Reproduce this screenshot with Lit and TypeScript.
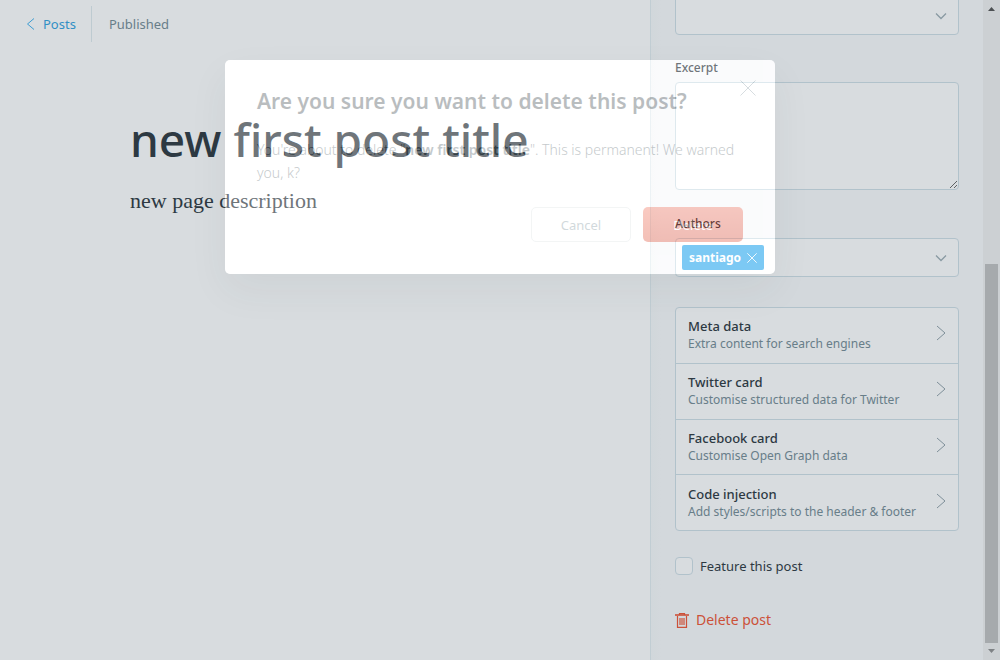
import { LitElement, html, css, svg } from "lit";
import { customElement, state } from "lit/decorators.js";

const chevronDown = html`<svg class="chevron" viewBox="0 0 12 8" width="12" height="8" aria-hidden="true">
  <path d="M1 1.5 6 6.5 11 1.5" fill="none" stroke="currentColor" stroke-width="1.3" />
</svg>`;
const chevronRight = html`<svg class="go" viewBox="0 0 10 16" width="10" height="16" aria-hidden="true">
  <path d="M1 1 9 8 1 15" fill="none" stroke="currentColor" stroke-width="1" />
</svg>`;
const cross = (size: number) => html`<svg viewBox="0 0 16 16" width=${size} height=${size} aria-hidden="true">
  ${svg`<path d="M.5.5 15.5 15.5M15.5.5.5 15.5" fill="none" stroke="currentColor" stroke-width=${14 / size} />`}
</svg>`;

@customElement("app-root")
export class AppRoot extends LitElement {
  @state() private postTitle = "new first post title";
  private rows = [
    ["Meta data", "Extra content for search engines"],
    ["Twitter card", "Customise structured data for Twitter"],
    ["Facebook card", "Customise Open Graph data"],
    ["Code injection", "Add styles/scripts to the header & footer"],
  ];

  static styles = css`
    :host {
      display: block;
      position: relative;
      height: 100vh;
      overflow: hidden;
      background: #fff;
      color: #2a343b;
      font: 13px/20px "Noto Sans", "Open Sans", sans-serif;
    }
    *, *::before, *::after { box-sizing: border-box; }
    button, input, select, textarea { font: inherit; color: inherit; margin: 0; }
    button { cursor: pointer; }
    svg { display: block; flex: none; }
    .page { display: flex; height: 100%; }
    .editor { flex: 1; min-width: 0; }
    .topbar { display: flex; align-items: center; padding: 6px 26px; height: 48px; }
    .back {
      display: flex; align-items: center; gap: 8px;
      height: 36px; padding-right: 15px;
      border-right: 1px solid #dfeaee;
      color: #3eb0ef; text-decoration: none;
    }
    .back-text { color: #2f9fe0; }
    .status { padding-left: 17px; color: #738a94; }
    .post { padding: 60px 40px 0 130px; }
    .post-title { margin: 0; font-size: 46px; line-height: 62px; font-weight: 500; }
    .post-text { margin: 17px 0 0; font: 22px/28px "Liberation Serif", serif; }
    .sidebar {
      width: 333px; flex: none;
      padding: 0 24px;
      background: linear-gradient(90deg, #f7f9fa, #f9fafc 10px);
      border-left: 1px solid #e3edf1;
      overflow: hidden;
    }
    .select-wrap, .tags {
      position: relative; display: flex; align-items: center;
      height: 39px; border: 1px solid #cfdfe7; border-radius: 4px; background: #fff;
    }
    .scrolled { margin-top: -4px; }
    .select-wrap select { width: 100%; height: 100%; border: 0; background: transparent; appearance: none; }
    .chevron { position: absolute; right: 11px; color: #9dadb4; pointer-events: none; }
    .field { margin-top: 24px; }
    .scrolled + .field { margin-top: 23px; }
    .label { display: block; margin-bottom: 4px; font-size: 12px; font-weight: 500; }
    .excerpt {
      display: block; width: 100%; height: 108px; padding: 8px 12px;
      border: 1px solid #cfdfe7; border-radius: 4px; background: #fff;
    }
    .tags { padding: 0 6px; }
    .tag {
      display: flex; align-items: center; gap: 6px; height: 25px; padding: 0 7px;
      border: 0; border-radius: 2px; background: #3eb0ef; color: #fff; font-weight: 700; font-size: 12px;
    }
    .tags input { flex: 1; min-width: 0; border: 0; background: transparent; outline: 0; }
    .list {
      display: flex; flex-direction: column; min-height: 224px; margin-top: 30px;
      border: 1px solid #cfdfe7; border-radius: 4px; background: #fff;
    }
    .row {
      display: flex; flex: 1; justify-content: space-between; align-items: center;
      padding: 0 12px;
      border: 0; background: transparent; text-align: left; line-height: 18px;
    }
    .row + .row { border-top: 1px solid #cfdfe7; }
    .row-title { display: block; font-weight: 500; }
    .row-text { display: block; font-size: 12px; color: #738a94; }
    .go { color: #8f9fa8; margin-bottom: 4px; }
    .feature { display: flex; align-items: center; gap: 7px; margin-top: 24px; height: 22px; }
    .feature input {
      appearance: none; width: 18px; height: 18px;
      border: 1px solid #cfdfe7; border-radius: 4px; background: #fff;
    }
    .delete {
      display: flex; align-items: center; gap: 7px; margin-top: 33px; padding: 0;
      border: 0; background: none; color: #f05230; font-size: 14px;
    }
    .scrollbar {
      display: flex; flex-direction: column; justify-content: space-between; align-items: center;
      width: 17px; flex: none; padding: 7px 0; background: #f1f1f1;
    }
    .thumb { width: 13px; height: 58.7%; margin-top: auto; margin-bottom: 6px; background: #c1c1c1; }
    .modal {
      position: absolute; top: 60px; left: 50%; transform: translateX(-50%);
      width: min(550px, 90%);
      border-radius: 5px;
      box-shadow: 0 16px 40px rgba(50, 60, 60, 0.06), 0 0 0 200vmax rgba(60, 80, 95, 0.2);
    }
    .panel {
      position: relative; padding: 28px 32px 32px;
      border-radius: 5px; background: #fff; opacity: 0.32;
    }
    .modal-title { margin: 0; font-size: 21px; line-height: 26px; font-weight: 600; }
    .modal-text { margin: 24px 0 0; font-size: 14px; line-height: 23px; font-weight: 300; color: #4a5a62; }
    .modal-text strong { font-weight: 600; }
    .actions { display: flex; justify-content: flex-end; gap: 12px; margin-top: 23px; }
    .btn { width: 100px; height: 35px; border: 1px solid #dae1e3; border-radius: 5px; background: #fff; color: #738a94; }
    .danger { border: 0; background: linear-gradient(#f05e43, #dc3d22); color: #fff; }
    .close { position: absolute; top: 20px; right: 19px; padding: 0; border: 0; background: none; color: #738a94; }
  `;

  render() {
    return html`
      <div class="page">
        <main class="editor">
          <header class="topbar">
            <a class="back" href="#posts">
              <svg viewBox="0 0 9 12" width="9" height="12" aria-hidden="true">
                <path d="M8 .5 1.5 6 8 11.5" fill="none" stroke="currentColor" />
              </svg>
              <span class="back-text">Posts</span>
            </a>
            <span class="status">Published</span>
          </header>
          <article class="post">
            <h1 class="post-title">${this.postTitle}</h1>
            <p class="post-text">new page description</p>
          </article>
        </main>
        <aside class="sidebar">
          <div class="select-wrap scrolled">
            <select aria-label="Tags"><option></option></select>
            ${chevronDown}
          </div>
          <div class="field">
            <label class="label" for="excerpt">Excerpt</label>
            <textarea class="excerpt" id="excerpt"></textarea>
          </div>
          <div class="field">
            <label class="label" for="authors">Authors</label>
            <div class="tags">
              <button class="tag">santiago ${cross(10)}</button>
              <input id="authors" />
              ${chevronDown}
            </div>
          </div>
          <div class="list">
            ${this.rows.map(([name, text]) => html`
              <button class="row">
                <span>
                  <span class="row-title">${name}</span>
                  <span class="row-text">${text}</span>
                </span>
                ${chevronRight}
              </button>`)}
          </div>
          <label class="feature"><input type="checkbox" />Feature this post</label>
          <button class="delete">
            <svg viewBox="0 0 14 15" width="14" height="15" aria-hidden="true">
              <path d="M0 2H14" fill="none" stroke="currentColor" stroke-width="1.6" />
              <path d="M4.5 2V.6H9.5V2M2.5 3V14.3H11.5V3M5 5V12M7 5V12M9 5V12" fill="none" stroke="currentColor" stroke-width="1.2" />
            </svg>
            Delete post
          </button>
        </aside>
        <div class="scrollbar" aria-hidden="true">
          <svg viewBox="0 0 7 4" width="7" height="4"><path d="M0 4 3.5 0 7 4Z" fill="#505050" /></svg>
          <div class="thumb"></div>
          <svg viewBox="0 0 7 4" width="7" height="4"><path d="M0 0 3.5 4 7 0Z" fill="#8f8f8f" /></svg>
        </div>
      </div>
      <div class="modal" role="dialog" aria-labelledby="modal-title">
        <div class="panel">
          <h2 class="modal-title" id="modal-title">Are you sure you want to delete this post?</h2>
          <p class="modal-text">You're about to delete "<strong>${this.postTitle}</strong>". This is permanent! We warned you, k?</p>
          <div class="actions">
            <button class="btn">Cancel</button>
            <button class="btn danger">Delete</button>
          </div>
          <button class="close" aria-label="Close">${cross(16)}</button>
        </div>
      </div>
    `;
  }
}
